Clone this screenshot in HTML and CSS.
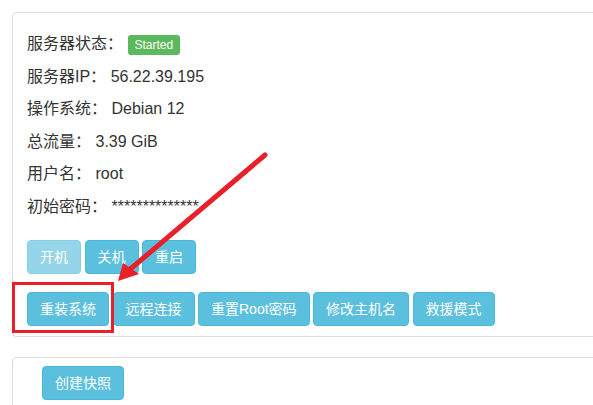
FILE: index.html
```html
<!DOCTYPE html>
<html lang="zh-CN">
<head>
<meta charset="utf-8">
<title>服务器</title>
<link rel="stylesheet" href="styles.css">
</head>
<body>
<div class="page">
  <div class="panel panel-main">
    <div class="info">
      <div class="row">服务器状态：<span class="val"><span class="badge">Started</span></span></div>
      <div class="row">服务器IP：<span class="val">56.22.39.195</span></div>
      <div class="row">操作系统：<span class="val">Debian 12</span></div>
      <div class="row">总流量：<span class="val">3.39 GiB</span></div>
      <div class="row">用户名：<span class="val">root</span></div>
      <div class="row">初始密码：<span class="val">**************</span></div>
    </div>
    <div class="actions">
      <div class="btn-row">
        <button class="btn disabled">开机</button>
        <button class="btn">关机</button>
        <button class="btn">重启</button>
      </div>
      <div class="btn-row">
        <button class="btn">重装系统</button>
        <button class="btn">远程连接</button>
        <button class="btn">重置Root密码</button>
        <button class="btn">修改主机名</button>
        <button class="btn">救援模式</button>
      </div>
    </div>
  </div>
  <div class="panel panel-second">
    <button class="btn">创建快照</button>
  </div>

  <div class="highlight"></div>
  <svg class="arrow" width="593" height="405" viewBox="0 0 593 405">
    <line x1="265" y1="155" x2="128" y2="271" stroke="#e8202a" stroke-width="5" stroke-linecap="round"/>
    <polygon points="118,281 123,263 139,274" fill="#e8202a"/>
  </svg>
</div>
</body>
</html>
```

FILE: styles.css
```css
html, body {
  margin: 0;
  padding: 0;
  background: #fff;
}
body {
  font-family: "Liberation Sans", "Noto Sans CJK SC", sans-serif;
  color: #333;
  overflow: hidden;
  height: 405px;
}
.page {
  position: relative;
  padding: 12px 0 0 12px;
  height: 393px;
  overflow: hidden;
}
.panel {
  border: 1px solid #ddd;
  border-radius: 4px;
  margin-right: -20px;
  background: #fff;
}
.panel-main {
  padding: 20px 0 10px 14px;
}
.panel-second {
  margin-top: 20px;
  padding: 8px 0 20px 29px;
}
.info {
  display: flex;
  flex-direction: column;
  gap: 10px;
}
.row {
  display: flex;
  align-items: center;
  height: 22.6px;
  font-size: 16px;
  line-height: 22.6px;
}
.val {
  margin-left: 4.5px;
  display: flex;
  align-items: center;
}
.badge {
  display: inline-block;
  background: #5cb85c;
  color: #fff;
  font-size: 12px;
  line-height: 12px;
  padding: 4px 7px;
  border-radius: 3px;
  margin-top: 1px;
}
.actions {
  margin-top: 21.5px;
  display: flex;
  flex-direction: column;
  gap: 18px;
}
.btn-row {
  display: flex;
  gap: 3.5px;
}
.btn {
  font-family: "Liberation Sans", "Noto Sans CJK SC", sans-serif;
  font-size: 14px;
  line-height: 20px;
  padding: 6px 12px;
  color: #fff;
  background: #5bc0de;
  border: 1px solid #46b8da;
  border-radius: 4px;
  margin: 0;
}
.btn.disabled {
  opacity: 0.65;
}
.highlight {
  position: absolute;
  left: 12px;
  top: 282px;
  width: 96px;
  height: 45px;
  border: 3px solid #e8202a;
}
.arrow {
  position: absolute;
  left: 0;
  top: 0;
  pointer-events: none;
}
```
